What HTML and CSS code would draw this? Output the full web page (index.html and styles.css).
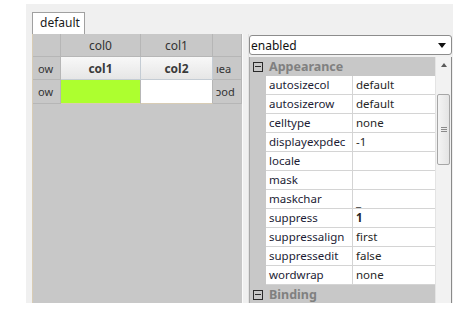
FILE: index.html
```html
<!DOCTYPE html>
<html lang="en">
<head>
    <meta charset="UTF-8">
    <title>Grid properties</title>
    <link rel="stylesheet" href="styles.css">
</head>
<body>

<div class="frame">
    <div class="tabs">
        <div class="tab">default</div>
    </div>

    <div class="main">
        <!-- grid preview -->
        <div class="sheet">
            <div class="grid">
                <div class="hd"></div>
                <div class="hd mid">col0</div>
                <div class="hd mid">col1</div>
                <div class="hd"></div>

                <div class="hd side">ow</div>
                <div class="band">col1</div>
                <div class="band">col2</div>
                <div class="hd">ıea</div>

                <div class="hd side last">ow</div>
                <div class="cell green last"></div>
                <div class="cell last"></div>
                <div class="hd last">ɔod</div>
            </div>
        </div>

        <div class="split"></div>

        <!-- property list -->
        <div class="props">
            <div class="combo">
                <span>enabled</span>
                <span class="caret"></span>
            </div>

            <div class="list">
                <div class="rows">
                    <div class="cat"><span class="gutter"><span class="toggle"></span></span><span class="cat-name">Appearance</span></div>
                    <div class="row"><span class="gutter"></span><span class="name">autosizecol</span><span class="value">default</span></div>
                    <div class="row"><span class="gutter"></span><span class="name">autosizerow</span><span class="value">default</span></div>
                    <div class="row"><span class="gutter"></span><span class="name">celltype</span><span class="value">none</span></div>
                    <div class="row"><span class="gutter"></span><span class="name">displayexpdec</span><span class="value">-1</span></div>
                    <div class="row"><span class="gutter"></span><span class="name">locale</span><span class="value"></span></div>
                    <div class="row"><span class="gutter"></span><span class="name">mask</span><span class="value"></span></div>
                    <div class="row"><span class="gutter"></span><span class="name">maskchar</span><span class="value low">_</span></div>
                    <div class="row"><span class="gutter"></span><span class="name">suppress</span><span class="value bold">1</span></div>
                    <div class="row"><span class="gutter"></span><span class="name">suppressalign</span><span class="value">first</span></div>
                    <div class="row"><span class="gutter"></span><span class="name">suppressedit</span><span class="value">false</span></div>
                    <div class="row"><span class="gutter"></span><span class="name">wordwrap</span><span class="value">none</span></div>
                    <div class="cat"><span class="gutter"><span class="toggle"></span></span><span class="cat-name">Binding</span></div>
                </div>

                <div class="scroll">
                    <div class="up"><span class="tri"></span></div>
                    <div class="thumb"><span class="grip"></span></div>
                </div>
            </div>
        </div>
    </div>
</div>

</body>
</html>
```

FILE: styles.css
```css
* {
    margin: 0;
    padding: 0;
    box-sizing: border-box;
}

body {
    background-color: #ffffff;
    font-family: "Noto Sans", "Liberation Sans", sans-serif;
    font-size: 12px;
    color: #222222;
}

/* outer panel */
.frame {
    margin: 4px 0 0 26px;
    width: 427px;
    height: 299px;
    background-color: #f0f0f0;
    padding: 8px 1px 0 6px;
    display: flex;
    flex-direction: column;
}

.tabs {
    display: flex;
    height: 22px;
}

.tab {
    width: 53px;
    height: 22px;
    background-color: #ffffff;
    border: 1px solid #a0a0a0;
    border-bottom: none;
    padding-left: 7px;
    line-height: 19px;
    color: #1a1a1a;
}

.main {
    flex: 1;
    display: flex;
    min-height: 0;
}

/* grid preview */
.sheet {
    width: 210px;
    background-color: #c8c8c8;
    border-left: 1px solid #d9ccb4;
}

.grid {
    display: grid;
    grid-template-columns: 28px 80px 72px 29px;
    grid-auto-rows: 23px;
}

.hd {
    border-right: 1px solid #b6b6b6;
    border-bottom: 1px solid #b6b6b6;
    font-size: 11px;
    color: #333333;
    display: flex;
    align-items: center;
    padding-left: 3px;
    white-space: nowrap;
}

.hd.side {
    padding-left: 5px;
}

.hd.mid {
    justify-content: center;
    padding-left: 0;
    font-size: 12px;
}

.hd.last,
.cell.last {
    height: 24px;
}

.band {
    background: linear-gradient(#f8f8f8, #e6e6e6);
    border-right: 1px solid #c4ccd4;
    border-bottom: 1px solid #c4ccd4;
    display: flex;
    align-items: center;
    justify-content: center;
    font-weight: bold;
    color: #3a3a3a;
}

.cell {
    background-color: #ffffff;
    border-right: 1px solid #b6b6b6;
    border-bottom: 1px solid #d8ccb4;
}

.cell.green {
    background-color: #adff2f;
}

.split {
    width: 7px;
    border-left: 1px solid #fbfbfb;
    border-right: 1px solid #e2e2e2;
}

/* property list */
.props {
    width: 203px;
    display: flex;
    flex-direction: column;
}

.combo {
    margin-top: 1px;
    height: 20px;
    background-color: #ffffff;
    border: 1px solid #8c8c8c;
    border-radius: 3px;
    padding: 0 5px 0 1px;
    display: flex;
    align-items: center;
    justify-content: space-between;
    color: #111111;
}

.caret {
    width: 0;
    height: 0;
    border-left: 4px solid transparent;
    border-right: 4px solid transparent;
    border-top: 5px solid #111111;
}

.list {
    flex: 1;
    margin-top: 2px;
    display: flex;
    overflow: hidden;
    border-left: 1px solid #a8a8a8;
    border-right: 1px solid #8a8a8a;
}

.rows {
    width: 185px;
}

.row,
.cat {
    display: flex;
    height: 19px;
}

.gutter {
    width: 16px;
    background-color: #c8c8c8;
    display: flex;
    align-items: center;
    justify-content: center;
}

.cat {
    background-color: #c8c8c8;
}

.cat-name {
    padding-left: 3px;
    font-size: 12.5px;
    font-weight: bold;
    color: #808080;
    line-height: 19px;
}

.toggle {
    width: 10px;
    height: 10px;
    border: 1px solid #2a2a2a;
    display: flex;
    align-items: center;
    justify-content: center;
}

.toggle::before {
    content: "";
    width: 6px;
    height: 1px;
    background-color: #2a2a2a;
}

.name,
.value {
    background-color: #ffffff;
    border-bottom: 1px solid #d4d4d4;
    padding-left: 3px;
    font-size: 11.5px;
    line-height: 18px;
    white-space: nowrap;
}

.name {
    width: 87px;
    border-right: 1px solid #d4d4d4;
    color: #1c1c34;
}

.value {
    width: 82px;
    color: #262626;
}

.value.bold {
    font-weight: bold;
}

.value.low {
    line-height: 24px;
}

/* scrollbar */
.scroll {
    width: 16px;
    background-color: #f2f2f2;
    border-left: 1px solid #e4e4e4;
    display: flex;
    flex-direction: column;
    align-items: center;
}

.up {
    height: 16px;
    display: flex;
    align-items: center;
    justify-content: center;
}

.tri {
    width: 0;
    height: 0;
    border-left: 3px solid transparent;
    border-right: 3px solid transparent;
    border-bottom: 4px solid #5a5a5a;
}

.thumb {
    margin-top: 21px;
    width: 13px;
    height: 71px;
    border: 1px solid #a6a6a6;
    border-radius: 2px;
    background: linear-gradient(90deg, #f4f4f4, #e4e4e4);
    display: flex;
    align-items: center;
    justify-content: center;
}

.grip {
    width: 6px;
    height: 5px;
    border-top: 1px solid #8a8a8a;
    border-bottom: 1px solid #8a8a8a;
    background: linear-gradient(#8a8a8a, #8a8a8a) center / 100% 1px no-repeat;
}
```
